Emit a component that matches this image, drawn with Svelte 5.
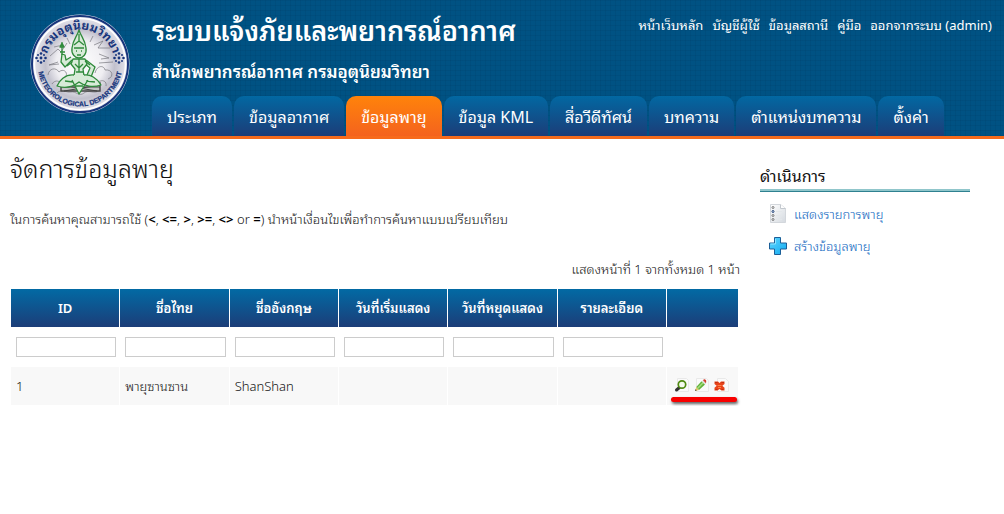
<script>
  const topLinks = ['หน้าเว็บหลัก', 'บัญชีผู้ใช้', 'ข้อมูลสถานี', 'คู่มือ', 'ออกจากระบบ (admin)'];
  const tabs = [
    'ประเภท',
    'ข้อมูลอากาศ',
    'ข้อมูลพายุ',
    'ข้อมูล KML',
    'สื่อวีดีทัศน์',
    'บทความ',
    'ตำแหน่งบทความ',
    'ตั้งค่า'
  ];
  const active = 2;
  const columns = ['ID', 'ชื่อไทย', 'ชื่ออังกฤษ', 'วันที่เริ่มแสดง', 'วันที่หยุดแสดง', 'รายละเอียด'];
  const rows = [['1', 'พายุซานซาน', 'ShanShan', '', '', '']];
  let filters = $state(columns.map(() => ''));
</script>

<header>
  <a class="logo" href="#home" aria-label="กรมอุตุนิยมวิทยา">
    <svg viewBox="0 0 100 100" width="100" height="100">
      <defs>
        <radialGradient id="disc">
          <stop offset="0" stop-color="#fff" />
          <stop offset=".5" stop-color="#efeef2" />
          <stop offset=".72" stop-color="#c2c1cd" />
          <stop offset="1" stop-color="#e6e6ee" />
        </radialGradient>
        <path id="arcTop" d="M15.500 50a34.500 34.500 0 0 1 69 0" />
        <path id="arcBottom" d="M7.500 50a42.500 42.500 0 0 0 85 0" />
      </defs>
      <circle cx="50" cy="50" r="49.5" fill="#dfe3ee" />
      <circle cx="50" cy="50" r="48" fill="url(#disc)" stroke="#17357c" stroke-width="2" />
      <circle cx="50" cy="50" r="45.5" fill="none" stroke="#fff" stroke-width="1.500" />
      <g fill="none" stroke="#77777e" stroke-width=".7">
        <path d="M20 42l8-7 3 3 6-9M18 61c1-7 8-8 11-3 4-4 9 0 7 4M22 70c3-5 9-3 10 1M64 31l9-4-5 7 12 0M69 40l10 4-8 1M65 59c2-8 9-8 10-3 8-1 9 7 3 9M67 69c6-5 10-1 9 3M27 79c5-5 9 0 14-1s8 5 13 1 10 2 16-3M28 48l-9 3 10-1M24 33l9-2M69 49l14-1M37 24l3 6M63 22l-3 6" />
      </g>
      <path d="M31 69h39v8H31z" fill="#c4c4c4" stroke="#444" stroke-width="1.400" />
      <path d="M31 71l36 6M70 71l-36 6M31 73h39" stroke="#444" />
      <g fill="#d8ebd8" stroke="#2f8a3b" stroke-width="1.300" stroke-linejoin="round">
        <path d="M49 16c-2 7-6 9-7 18-1 6 3 10 7 10s8-4 7-10c-1-9-5-11-7-18z" />
        <path d="M44 34h10M44 31l5-4 5 4M49 20v7M46 37h1M51 37h1M47 41h4" />
        <path d="M42 46l-7 7-4-5 1-8 3 1 1 5 5-3M56 46l9 7-4 10-4-2 3-7-5-4" />
        <path d="M43 45h12l2 5-4 5 1 7H44l1-7-4-5z" />
        <path d="M44 61c-9-1-15 6-17 11 9 3 17 0 22-4 5 4 14 6 22 3-4-7-11-11-17-10M42 66l7 14 9-14M35 67l8 1M56 67l9 1M45 72l8 0" />
        <path d="M32 28v13M30 33l2-4 2 4zM30 38h5M45 50l4 4 4-4M49 45v13M46 58h8M37 52l5-4M60 51l-5-4" />
      </g>
      <g fill="#17357c">
        <g id="star"><circle cx="11" cy="44" r="1.400" /><circle cx="11" cy="39.500" r="1.300" /><circle cx="11" cy="48.500" r="1.300" /><circle cx="6.500" cy="44" r="1.300" /><circle cx="15.500" cy="44" r="1.300" /><circle cx="8" cy="41" r="1" /><circle cx="14" cy="41" r="1" /><circle cx="8" cy="47" r="1" /><circle cx="14" cy="47" r="1" /></g>
        <use href="#star" x="78" />
      </g>
      <text class="seal-th" text-anchor="middle"><textPath href="#arcTop" startOffset="50%">กรมอุตุนิยมวิทยา</textPath></text>
      <text class="seal-en" text-anchor="middle"><textPath href="#arcBottom" startOffset="50%">METEOROLOGICAL DEPARTMENT</textPath></text>
    </svg>
  </a>
  <div class="banner">
    <div class="top">
      <div class="titles">
        <h1>ระบบแจ้งภัยและพยากรณ์อากาศ</h1>
        <p>สำนักพยากรณ์อากาศ กรมอุตุนิยมวิทยา</p>
      </div>
      <nav class="account">
        {#each topLinks as link}<a href="#top">{link}</a>{/each}
      </nav>
    </div>
    <nav class="tabs">
      {#each tabs as tab, i}<a href="#tab" class:active={i === active}>{tab}</a>{/each}
    </nav>
  </div>
</header>

<div class="page">
  <main>
    <h2>จัดการข้อมูลพายุ</h2>
    <p class="hint">
      ในการค้นหาคุณสามารถใช้ (<b>&lt;</b>, <b>&lt;=</b>, <b>&gt;</b>, <b>&gt;=</b>, <b>&lt;&gt;</b> or <b>=</b>) นำหน้าเงื่อนไขเพื่อทำการค้นหาแบบเปรียบเทียบ
    </p>
    <p class="summary">แสดงหน้าที่ 1 จากทั้งหมด 1 หน้า</p>
    <table>
      <colgroup>
        {#each columns as _}<col />{/each}
        <col class="actions-col" />
      </colgroup>
      <thead>
        <tr>
          {#each columns as column}<th>{column}</th>{/each}
          <th></th>
        </tr>
        <tr class="filters">
          {#each columns as column, i}
            <td><input type="text" aria-label={column} bind:value={filters[i]} /></td>
          {/each}
          <td></td>
        </tr>
      </thead>
      <tbody>
        {#each rows as row}
          <tr>
            {#each row as cell}<td>{cell}</td>{/each}
            <td>
              <div class="buttons">
                <button aria-label="ดู">
                  <svg viewBox="0 0 16 16" width="16" height="16">
                    <path d="M3.500 .500h9l2 2v11h-11z" fill="#fafafa" stroke="#e9e9e9" />
                    <path d="M5.500 9.500L2.500 12" stroke="#333" stroke-width="3" stroke-linecap="round" />
                    <circle cx="8" cy="6.500" r="3.700" fill="#f4faec" stroke="#4f8a10" stroke-width="1.700" />
                  </svg>
                </button>
                <button aria-label="แก้ไข">
                  <svg viewBox="0 0 16 16" width="16" height="16">
                    <path d="M2.500 .500h10l2 2v11h-12z" fill="#fafafa" stroke="#e9e9e9" />
                    <g transform="translate(-1 -1)">
                      <path d="M2 14l1.300-4L6 13z" fill="#e9c86a" />
                      <path d="M2 14l.6-1.800L3.800 13.300z" fill="#333" />
                      <path d="M3.300 10L8.500 4.200l3.500 3.300L6 13z" fill="#62b23a" />
                      <path d="M4.500 11.500l5.800-6" stroke="#a6dc7c" stroke-width="1.500" />
                      <path d="M8.500 4.200l1.500-1 3 3-1 1.300z" fill="#ddd" />
                      <path d="M10 3.200l1-.9c1-.5 2.700 1 2.200 2.200l-.2 1.700z" fill="#d33b2c" />
                    </g>
                  </svg>
                </button>
                <button aria-label="ลบ">
                  <svg viewBox="0 0 16 16" width="16" height="16">
                    <path d="M3.500.5h8l3 3v10h-11z" fill="#fafafa" stroke="#e9e9e9" />
                    <path d="M.5 3.500h3.500l1.500 1.500L7 3.500h3.500v2.500L8.300 7.700l2.200 2V12.500H7.500L5.500 11l-2 1.500H.5V9.700l2.200-2L.5 6z" fill="#e8431a" />
                    <path d="M1 4.500h2.500M7.500 4.500H10M1.500 11.500h2M7.500 11.500h2" stroke="#bf3010" />
                    <path d="M3.500 7.500h4M4 9.500h3" stroke="#ff8244" />
                  </svg>
                </button>
              </div>
            </td>
          </tr>
        {/each}
      </tbody>
    </table>
  </main>

  <aside>
    <h3>ดำเนินการ</h3>
    <ul>
      <li>
        <a href="#list">
          <svg viewBox="0 0 20 20" width="20" height="20">
            <defs>
              <linearGradient id="sheet" x2="1" y2="1"><stop stop-color="#fff" /><stop offset="1" stop-color="#d5dae0" /></linearGradient>
            </defs>
            <path d="M2.500 .500h10l5 4v14h-15z" fill="url(#sheet)" stroke="#d3d7dc" />
            <path d="M12.500 .500v4h5" fill="#fff" stroke="#c3c8ce" />
            <g fill="none" stroke="#777">
              <circle cx="5" cy="3.500" r="1" /><circle cx="5" cy="7.500" r="1" stroke="#1c3f78" />
              <circle cx="5" cy="11.500" r="1" /><circle cx="5" cy="15.500" r="1" />
            </g>
            <path d="M8 7.500h6M8 11.500h6M8 15.500h6" stroke="#e3e7ea" />
          </svg>
          <span>แสดงรายการพายุ</span>
        </a>
      </li>
      <li>
        <a href="#create">
          <svg viewBox="0 0 20 20" width="20" height="20">
            <defs>
              <linearGradient id="plus" x2="1" y2="1"><stop stop-color="#5fd6ff" /><stop offset="1" stop-color="#12aaf0" /></linearGradient>
            </defs>
            <path d="M6.500 1.500h6V7h6v6h-6v5.500h-6V13h-5V7h5z" fill="url(#plus)" stroke="#1c5f98" stroke-linejoin="round" />
            <path d="M7.500 3v5H2.500" fill="none" stroke="#8fe4ff" />
          </svg>
          <span>สร้างข้อมูลพายุ</span>
        </a>
      </li>
    </ul>
  </aside>
</div>

<style>
  :global(body) {
    background: #fff;
    font-family: "Noto Sans Thai Looped", "Noto Looped Thai", "Loma", "Garuda", "Laksaman", "Noto Sans", sans-serif;
    font-size: 13px;
    font-weight: 300;
    line-height: 20px;
    color: #111;
  }
  h1, h2, h3, p, ul { margin: 0; padding: 0; font-weight: 300; }
  a { text-decoration: none; color: inherit; }

  header {
    display: flex;
    gap: 22px;
    padding-left: 30px;
    color: #fff;
    border-bottom: 3px solid #f76b1c;
    background:
      repeating-linear-gradient(0deg, rgba(0, 30, 60, .08) 0 1px, transparent 1px 5px),
      repeating-linear-gradient(90deg, rgba(0, 30, 60, .08) 0 1px, transparent 1px 5px),
      #005283;
  }
  .logo { display: block; height: 100px; padding-top: 14px; }
  .logo svg { display: block; }
  .seal-th { font-size: 12px; font-weight: 700; fill: #17357c; }
  .seal-en { font: 700 7px "Liberation Sans", sans-serif; fill: #17357c; stroke: #17357c; stroke-width: .2; }
  .banner { flex: 1; min-width: 0; }
  .top { display: flex; justify-content: space-between; height: 96px; white-space: nowrap; }
  h1 { padding-top: 9px; font-size: 27px; line-height: 40px; font-weight: 600; }
  .titles p { padding-top: 12px; font-size: 17px; line-height: 20px; font-weight: 600; }
  .account { display: flex; gap: 9px; padding: 15px 12px 0 0; font-weight: 400; }
  .tabs { display: flex; gap: 2px; white-space: nowrap; }
  .tabs a {
    padding: 0 15px;
    font-size: 16px;
    font-weight: 400;
    line-height: 40px;
    border-radius: 10px 10px 0 0;
    background: linear-gradient(#0268a2, #1c3d78);
  }
  .tabs .active { background: linear-gradient(#ff830a, #f4631e); }

  .page { display: flex; gap: 20px; padding: 8px 34px 0 10px; }
  main { flex: 1; min-width: 0; }
  h2 { font-size: 25px; line-height: 40px; }
  .hint { padding-top: 22px; }
  .hint b { font-weight: 600; color: #000; }
  .summary { padding-top: 30px; text-align: right; }
  table {
    width: calc(100% - 1px);
    margin-top: 9px;
    table-layout: fixed;
    border-spacing: 1px;
  }
  .actions-col { width: 71px; }
  th {
    height: 38px;
    padding: 0;
    color: #fff;
    font-weight: 600;
    background: linear-gradient(#026aa4, #1c3d78);
  }
  td { height: 38px; padding: 0 3px 0 5px; }
  tbody td { background: #f8f8f8; }
  td input {
    display: block;
    box-sizing: border-box;
    width: 100%;
    height: 20px;
    padding: 1px 4px;
    border: 1px solid #ccc;
    background: #fff;
    font: inherit;
  }
  .buttons {
    position: relative;
    display: flex;
    gap: 4px;
    padding-left: 2px;
  }
  .buttons::after {
    content: "";
    position: absolute;
    left: -1px;
    top: 19px;
    width: 66px;
    height: 5px;
    border-radius: 3px;
    background: #f80000;
    box-shadow: 1px 2px 3px rgba(0, 0, 0, .6);
  }
  button { padding: 0; border: 0; background: none; cursor: pointer; }
  button svg { display: block; }

  aside { width: 210px; padding-top: 17px; }
  h3 {
    padding-bottom: 5px;
    font-size: 16px;
    font-weight: 400;
    line-height: 22px;
    border-bottom: 1px solid #2f8190;
    box-shadow: inset 0 -2px #90c6cb;
  }
  ul { display: grid; gap: 12px; padding: 12px 0 0 8px; list-style: none; }
  li a { display: flex; gap: 6px; color: #0f66c0; }
</style>
